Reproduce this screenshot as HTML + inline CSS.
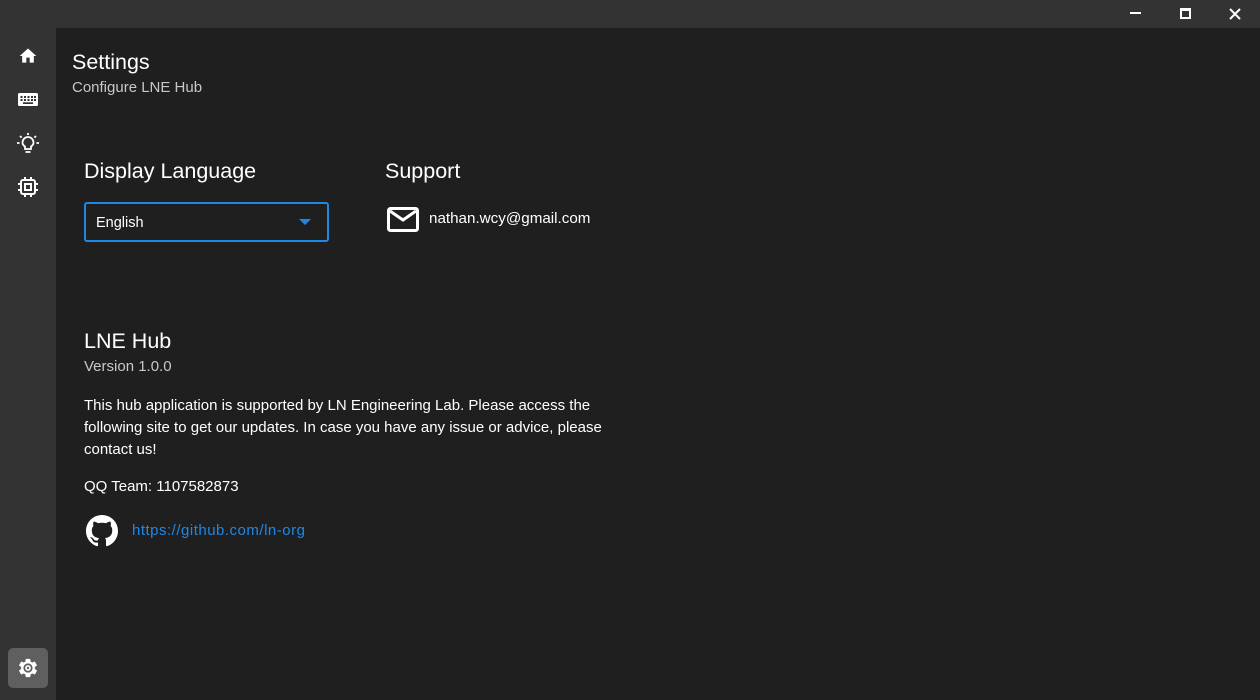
<!DOCTYPE html>
<html><head><meta charset="utf-8"><style>
*{margin:0;padding:0;box-sizing:border-box}
body{width:1260px;height:700px;background:#1f1f1f;font-family:"Liberation Sans",sans-serif;color:#fff;position:relative;overflow:hidden}
.top{position:absolute;left:0;top:0;width:1260px;height:28px;background:#333}
.side{position:absolute;left:0;top:28px;width:56px;height:672px;background:#333}
.t{position:absolute;white-space:nowrap}
svg{position:absolute}
</style></head><body>
<div class="top"></div>
<div class="side"></div>
<div style="position:absolute;left:1130px;top:12px;width:11px;height:2px;background:#fff"></div>
<div style="position:absolute;left:1180px;top:8px;width:11px;height:11px;border:2px solid #fff;border-top-width:3px"></div>
<svg style="left:1229px;top:8px" width="12" height="12"><path d="M1 1L11 11M11 1L1 11" stroke="#fff" stroke-width="2"/></svg>
<svg style="left:18px;top:46px" width="20" height="20" viewBox="0 0 24 24"><path d="M10 20v-6h4v6h5v-8h3L12 3 2 12h3v8z" fill="#fff"/></svg>
<svg style="left:17px;top:90px" width="22" height="20" viewBox="0 0 22 20"><rect x="1" y="3" width="20" height="13" rx="1.5" fill="#fff"/><g fill="#333"><rect x="3.5" y="6" width="2" height="2"/><rect x="7" y="6" width="2" height="2"/><rect x="10.5" y="6" width="2" height="2"/><rect x="14" y="6" width="2" height="2"/><rect x="17" y="6" width="2" height="2"/><rect x="3.5" y="9" width="2" height="2"/><rect x="7" y="9" width="2" height="2"/><rect x="10.5" y="9" width="2" height="2"/><rect x="14" y="9" width="2" height="2"/><rect x="17" y="9" width="2" height="2"/><rect x="6" y="12.3" width="10" height="1.7"/></g></svg>
<svg style="left:16px;top:132px" width="24" height="24" viewBox="0 0 24 24"><g stroke="#fff" stroke-width="1.8" fill="none"><path d="M9 17v-2.5C7 13.3 6.5 11.8 6.5 10.5a5.5 5.5 0 0 1 11 0c0 1.3-.5 2.8-2.5 4V17z"/><path d="M9.5 20h5M1 11h2.5M20.5 11H23M4 4l1.6 1.6M20 4l-1.6 1.6M12 1v2"/></g></svg>
<svg style="left:18px;top:177px" width="20" height="20" viewBox="0 0 20 20"><g fill="none" stroke="#fff" stroke-width="2"><rect x="3" y="3" width="14" height="14" rx="2"/><rect x="7" y="7" width="6" height="6"/></g><g stroke="#fff" stroke-width="2"><path d="M7 0v3M13 0v3M7 17v3M13 17v3M0 7h3M0 13h3M17 7h3M17 13h3"/></g></svg>
<div style="position:absolute;left:8px;top:648px;width:40px;height:40px;background:#5f5f5f;border-radius:5px"></div>
<svg style="left:17px;top:657px" width="22" height="22" viewBox="0 0 24 24"><path fill="#fff" d="M19.4 13c.04-.33.06-.66.06-1s-.02-.67-.06-1l2.1-1.650c.2-.15.24-.43.12-.64l-2-3.46c-.12-.22-.39-.3-.61-.22l-2.49 1c-.52-.4-1.080-.73-1.69-.98l-.38-2.65A.49.49 0 0 0 14 2h-4c-.25 0-.46.18-.49.42l-.38 2.65c-.61.25-1.17.59-1.69.98l-2.49-1c-.23-.09-.49 0-.61.22l-2 3.46c-.13.22-.07.49.12.64L4.56 11c-.04.33-.06.67-.06 1s.02.67.06 1l-2.1 1.65c-.2.15-.25.43-.12.64l2 3.46c.12.22.39.3.61.22l2.49-1c.52.4 1.08.73 1.69.98l.38 2.65c.03.24.24.42.49.42h4c.25 0 .46-.18.49-.42l.38-2.65c.61-.25 1.17-.59 1.69-.98l2.49 1c.23.09.49 0 .61-.22l2-3.46c.12-.22.07-.49-.12-.64zM12 17a5 5 0 1 1 0-10 5 5 0 0 1 0 10z"/><circle cx="12" cy="12" r="2.2" fill="none" stroke="#fff" stroke-width="1.8"/></svg>
<div class="t" style="left:72px;top:50px;font-size:21.5px">Settings</div>
<div class="t" style="left:72px;top:79px;font-size:15px;color:#c8c8c8">Configure LNE Hub</div>
<div class="t" style="left:84px;top:159px;font-size:21.5px">Display Language</div>
<div style="position:absolute;left:84px;top:202px;width:245px;height:40px;border:2px solid #1e88e5;border-radius:3px"></div>
<div class="t" style="left:96px;top:215px;font-size:14.5px">English</div>
<svg style="left:299px;top:219px" width="12" height="6"><path d="M0 0h12L6 6z" fill="#1e88e5"/></svg>
<div class="t" style="left:385px;top:159px;font-size:21.5px">Support</div>
<svg style="left:387px;top:207px" width="32" height="26" viewBox="0 0 32 26"><rect x="1.5" y="1.5" width="29" height="22" rx="2" fill="none" stroke="#fff" stroke-width="3"/><path d="M3 4l13 9 13-9" fill="none" stroke="#fff" stroke-width="3"/></svg>
<div class="t" style="left:429px;top:210px;font-size:15.2px">nathan.wcy@gmail.com</div>
<div class="t" style="left:84px;top:329px;font-size:21.5px">LNE Hub</div>
<div class="t" style="left:84px;top:358px;font-size:15px;color:#c8c8c8">Version 1.0.0</div>
<div style="position:absolute;left:84px;top:395px;width:560px;font-size:15px;line-height:22px">This hub application is supported by LN Engineering Lab. Please access the following site to get our updates. In case you have any issue or advice, please contact us!</div>
<div class="t" style="left:84px;top:478px;font-size:15px">QQ Team: 1107582873</div>
<svg style="left:86px;top:515px" width="32" height="32" viewBox="0 0 16 16"><path fill="#fff" d="M8 0C3.58 0 0 3.580 0 8c0 3.54 2.29 6.53 5.47 7.59.4.07.55-.17.55-.38 0-.19-.01-.82-.01-1.49-2.01.37-2.53-.49-2.69-.94-.09-.23-.48-.94-.82-1.13-.28-.15-.68-.52-.01-.53.63-.01 1.08.58 1.23.82.72 1.21 1.87.87 2.33.66.07-.52.28-.87.51-1.07-1.78-.2-3.64-.89-3.64-3.95 0-.87.31-1.59.82-2.15-.08-.2-.36-1.02.08-2.12 0 0 .67-.21 2.2.82.64-.18 1.32-.27 2-.27.68 0 1.36.09 2 .27 1.53-1.04 2.2-.82 2.2-.82.44 1.1.16 1.92.08 2.12.51.56.82 1.27.82 2.15 0 3.07-1.87 3.75-3.65 3.950.29.25.54.73.54 1.48 0 1.07-.01 1.93-.01 2.2 0 .21.15.46.55.38A8.013 8.013 0 0 0 16 8c0-4.42-3.58-8-8-8z"/></svg>
<div class="t" style="left:132px;top:522px;font-size:15px;letter-spacing:0.5px;color:#1e88e5">https://github.com/ln-org</div>
</body></html>
